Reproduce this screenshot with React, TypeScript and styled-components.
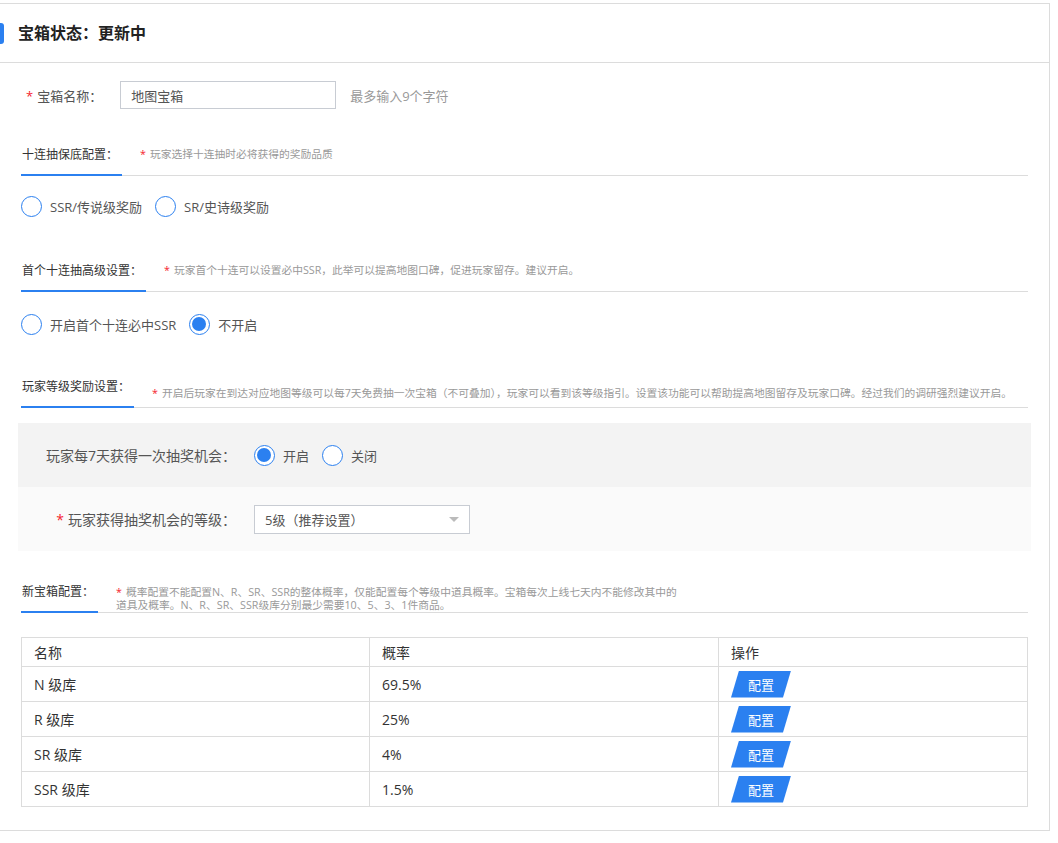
import React, { FC } from 'react';
import styled, { createGlobalStyle } from 'styled-components';

const BLUE = '#2b80f0';
const LINE = '#dcdcdc';

const GlobalStyle = createGlobalStyle`
  body {
    margin: 0;
    background: #fff;
    font-family: 'Open Sans', 'Noto Sans CJK SC', sans-serif;
    color: #333;
  }
`;

const Panel = styled.div`
  width: 1050px;
  margin-top: 3px;
  border: 1px solid ${LINE};
  border-left: none;
  box-sizing: border-box;
`;

const Header = styled.div`
  height: 58px;
  display: flex;
  align-items: center;
  border-bottom: 1px solid ${LINE};
`;

const HeaderMark = styled.span`
  width: 4px;
  height: 21px;
  background: ${BLUE};
  border-radius: 0 3px 3px 0;
  margin-right: 14px;
`;

const HeaderTitle = styled.h1`
  margin: 0;
  font-size: 16px;
  line-height: 22px;
  font-weight: 700;
  color: #222;
`;

const Body = styled.div`
  padding: 18px 21px 23px;
`;

const Star = styled.span`
  color: #f5222d;
  margin-right: 4px;
`;

const NameRow = styled.div`
  display: flex;
  align-items: center;
  height: 28px;
`;

const NameLabel = styled.label`
  font-size: 13px;
  color: #555;
  padding-left: 5px;
  margin-right: 18px;
`;

const TextInput = styled.input`
  width: 216px;
  height: 28px;
  box-sizing: border-box;
  border: 1px solid #c8ccd3;
  padding: 0 10px;
  font-family: inherit;
  font-size: 13px;
  color: #555;
  outline: none;
`;

const Hint = styled.span`
  margin-left: 14px;
  font-size: 13px;
  color: #999;
`;

const SectionHead = styled.div<{ $top: number }>`
  margin-top: ${({ $top }) => $top}px;
  display: flex;
  align-items: flex-end;
  border-bottom: 1px solid ${LINE};
`;

const Tab = styled.div`
  font-size: 12px;
  line-height: 18px;
  color: #333;
  padding: 0 4px 10px 1px;
  border-bottom: 2px solid ${BLUE};
  margin-bottom: -1px;
  white-space: nowrap;
`;

const Note = styled.div<{ $pb: number; $lh?: number }>`
  margin-left: 18px;
  padding-bottom: ${({ $pb }) => $pb}px;
  font-size: 10.75px;
  line-height: ${({ $lh }) => $lh ?? 16}px;
  color: #999;
  white-space: nowrap;
`;

const RadioRow = styled.div<{ $top: number }>`
  margin-top: ${({ $top }) => $top}px;
  display: flex;
  align-items: center;
  gap: 13px;
  height: 21px;
`;

const RadioItem = styled.label`
  display: flex;
  align-items: center;
  gap: 8px;
  font-size: 13px;
  color: #555;
  cursor: pointer;
`;

const RadioCircle = styled.span<{ $on?: boolean }>`
  position: relative;
  width: 21px;
  height: 21px;
  box-sizing: border-box;
  border: 1.5px solid ${BLUE};
  border-radius: 50%;
  background: #fff;
  &::after {
    content: '';
    display: ${({ $on }) => ($on ? 'block' : 'none')};
    position: absolute;
    left: 2px;
    top: 2px;
    width: 14px;
    height: 14px;
    border-radius: 50%;
    background: ${BLUE};
  }
`;

const GreyBox = styled.div`
  margin: 15px -3px 0;
`;

const GreyRow = styled.div<{ $bg: string }>`
  height: 64px;
  background: ${({ $bg }) => $bg};
  display: grid;
  grid-template-columns: 218px 1fr;
  column-gap: 18px;
  align-items: center;
`;

const GreyLabel = styled.div`
  text-align: right;
  font-size: 14px;
  color: #555;
  white-space: nowrap;
`;

const Select = styled.div`
  width: 216px;
  height: 29px;
  box-sizing: border-box;
  border: 1px solid #c8ccd3;
  background: #fff;
  display: flex;
  align-items: center;
  justify-content: space-between;
  padding: 0 10px;
  font-size: 13px;
  color: #555;
`;

const Caret = styled.span`
  width: 0;
  height: 0;
  border-left: 5px solid transparent;
  border-right: 5px solid transparent;
  border-top: 5px solid #bbb;
`;

const Table = styled.table`
  margin-top: 24px;
  width: 1007px;
  border-collapse: collapse;
  font-size: 14px;
  color: #333;
  table-layout: fixed;
`;

const Th = styled.th<{ $w?: number }>`
  width: ${({ $w }) => ($w ? `${$w}px` : 'auto')};
  height: 28px;
  padding: 0 12px;
  border: 1px solid ${LINE};
  text-align: left;
  font-weight: 400;
`;

const Td = styled.td`
  height: 34px;
  padding: 0 12px;
  border: 1px solid ${LINE};
`;

const ConfigButton = styled.button`
  width: 60px;
  height: 27px;
  border: none;
  background: ${BLUE};
  color: #fff;
  font-family: inherit;
  font-size: 13px;
  cursor: pointer;
  clip-path: polygon(8px 0, 100% 0, calc(100% - 8px) 100%, 0 100%);
  display: block;
`;

const rows = [
  { name: 'N 级库', rate: '69.5%' },
  { name: 'R 级库', rate: '25%' },
  { name: 'SR 级库', rate: '4%' },
  { name: 'SSR 级库', rate: '1.5%' },
];

const App: FC = () => (
  <>
    <GlobalStyle />
    <Panel>
      <Header>
        <HeaderMark />
        <HeaderTitle>宝箱状态：更新中</HeaderTitle>
      </Header>
      <Body>
        <NameRow>
          <NameLabel>
            <Star>*</Star>宝箱名称：
          </NameLabel>
          <TextInput defaultValue='地图宝箱' />
          <Hint>最多输入9个字符</Hint>
        </NameRow>

        <SectionHead $top={37}>
          <Tab>十连抽保底配置：</Tab>
          <Note $pb={13}>
            <Star>*</Star>玩家选择十连抽时必将获得的奖励品质
          </Note>
        </SectionHead>
        <RadioRow $top={20}>
          <RadioItem>
            <RadioCircle />
            SSR/传说级奖励
          </RadioItem>
          <RadioItem>
            <RadioCircle />
            SR/史诗级奖励
          </RadioItem>
        </RadioRow>

        <SectionHead $top={45}>
          <Tab>首个十连抽高级设置：</Tab>
          <Note $pb={13}>
            <Star>*</Star>玩家首个十连可以设置必中SSR，此举可以提高地图口碑，促进玩家留存。建议开启。
          </Note>
        </SectionHead>
        <RadioRow $top={22}>
          <RadioItem>
            <RadioCircle />
            开启首个十连必中SSR
          </RadioItem>
          <RadioItem>
            <RadioCircle $on />
            不开启
          </RadioItem>
        </RadioRow>

        <SectionHead $top={43}>
          <Tab>玩家等级奖励设置：</Tab>
          <Note $pb={6}>
            <Star>*</Star>开启后玩家在到达对应地图等级可以每7天免费抽一次宝箱（不可叠加），玩家可以看到该等级指引。设置该功能可以帮助提高地图留存及玩家口碑。经过我们的调研强烈建议开启。
          </Note>
        </SectionHead>
        <GreyBox>
          <GreyRow $bg='#f3f3f3'>
            <GreyLabel>玩家每7天获得一次抽奖机会：</GreyLabel>
            <RadioRow $top={0}>
              <RadioItem>
                <RadioCircle $on />
                开启
              </RadioItem>
              <RadioItem>
                <RadioCircle />
                关闭
              </RadioItem>
            </RadioRow>
          </GreyRow>
          <GreyRow $bg='#fafafa'>
            <GreyLabel>
              <Star>*</Star>玩家获得抽奖机会的等级：
            </GreyLabel>
            <Select>
              5级（推荐设置）
              <Caret />
            </Select>
          </GreyRow>
        </GreyBox>

        <SectionHead $top={32}>
          <Tab>新宝箱配置：</Tab>
          <Note $pb={0} $lh={13}>
            <Star>*</Star>概率配置不能配置N、R、SR、SSR的整体概率，仅能配置每个等级中道具概率。宝箱每次上线七天内不能修改其中的
            <br />
            道具及概率。N、R、SR、SSR级库分别最少需要10、5、3、1件商品。
          </Note>
        </SectionHead>

        <Table>
          <thead>
            <tr>
              <Th $w={323}>名称</Th>
              <Th $w={324}>概率</Th>
              <Th>操作</Th>
            </tr>
          </thead>
          <tbody>
            {rows.map((r) => (
              <tr key={r.name}>
                <Td>{r.name}</Td>
                <Td>{r.rate}</Td>
                <Td>
                  <ConfigButton>配置</ConfigButton>
                </Td>
              </tr>
            ))}
          </tbody>
        </Table>
      </Body>
    </Panel>
  </>
);

export default App;
